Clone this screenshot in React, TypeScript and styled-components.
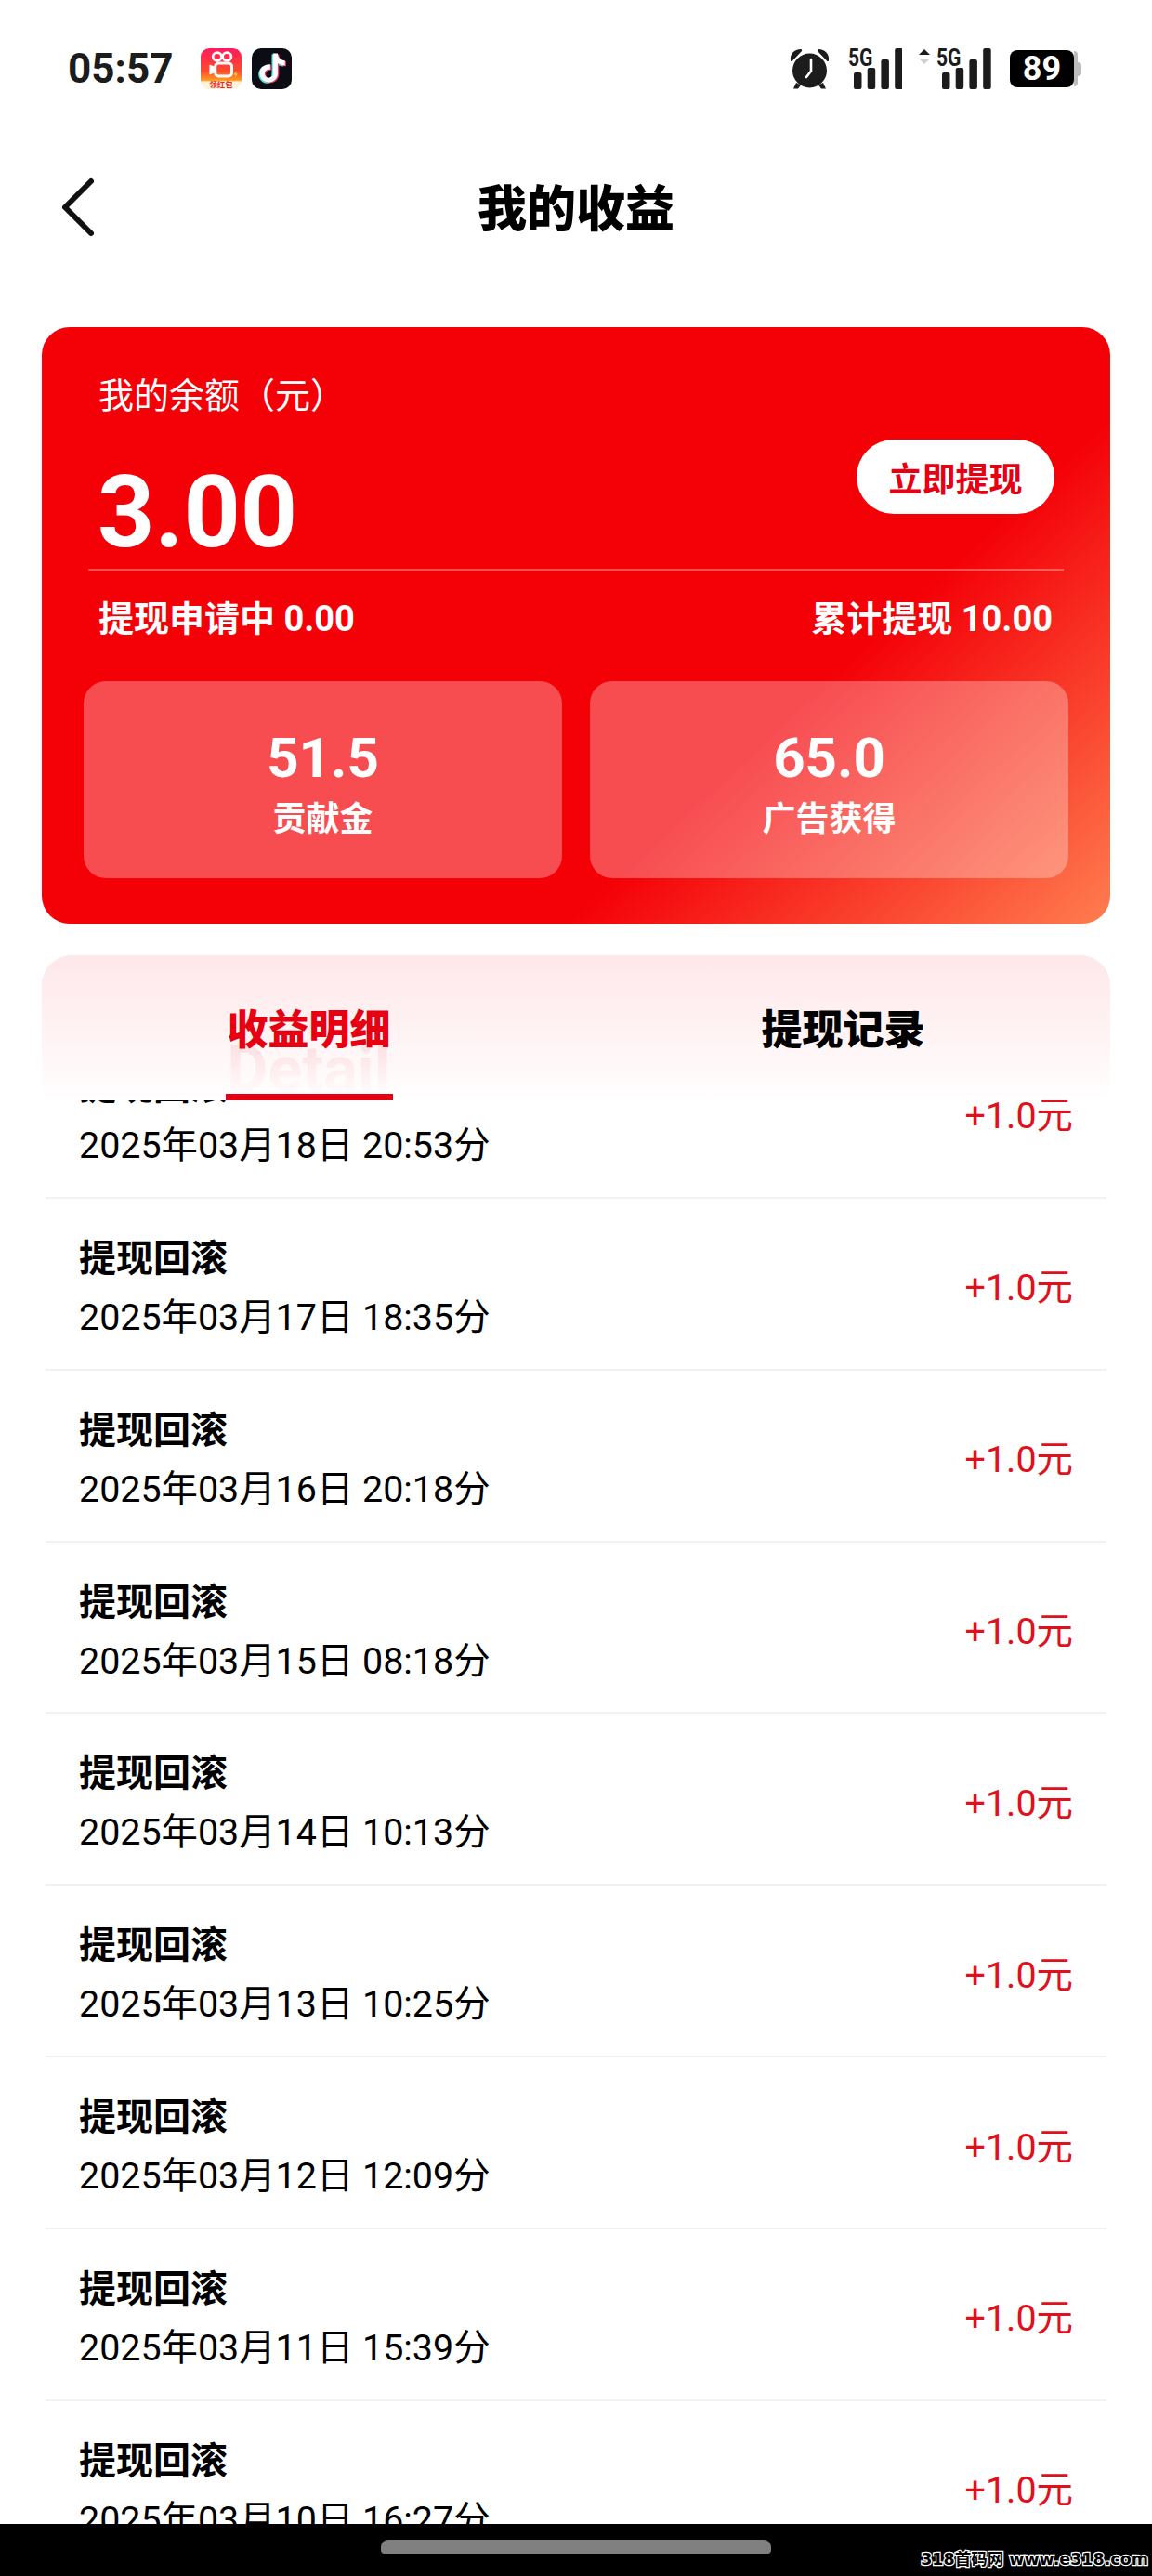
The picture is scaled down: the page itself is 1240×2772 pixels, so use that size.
import React from "react";
import styled, { createGlobalStyle } from "styled-components";

const Global = createGlobalStyle`
  html, body { margin: 0; padding: 0; background: #fff; }
  * { box-sizing: border-box; }
`;

const FONT = `Roboto, "Noto Sans CJK SC", sans-serif`;

const Page = styled.div`
  width: 1240px;
  height: 2772px;
  display: flex;
  flex-direction: column;
  overflow: hidden;
  background: #fff;
  font-family: ${FONT};
  color: #000;
`;

const StatusBar = styled.header`
  height: 150px;
  flex: none;
  padding: 52px 76px 0 73px;
  display: flex;
  justify-content: space-between;
  align-items: flex-start;
`;
const StatusLeft = styled.div`
  display: flex;
  align-items: center;
  height: 44px;
`;
const Clock = styled.span`
  font-size: 44px;
  line-height: 44px;
  font-weight: 700;
  color: #1c1c1c;
  width: 143px;
`;
const AppIcon = styled.svg`
  display: block;
  margin-right: 11px;
`;
const StatusRight = styled.div`
  display: flex;
  align-items: center;
  gap: 18px;
  height: 44px;
`;
const Battery = styled.div`
  display: flex;
  align-items: center;
  width: 77px;
`;
const BatteryBody = styled.div`
  width: 69px;
  height: 40px;
  background: #000;
  border-radius: 8px;
  color: #fff;
  font-size: 36px;
  font-weight: 700;
  line-height: 40px;
  text-align: center;
`;
const BatteryRim = styled.div`
  width: 4px;
  height: 38px;
  background: #bdbdbd;
  border-radius: 0 7px 7px 0;
`;
const BatteryNub = styled.div`
  width: 4px;
  height: 15px;
  background: #bdbdbd;
  border-radius: 0 4px 4px 0;
`;

const NavBar = styled.nav`
  height: 150px;
  flex: none;
  position: relative;
  display: flex;
  align-items: center;
  justify-content: center;
  padding-top: 2px;
  margin-bottom: 52px;
`;
const BackIcon = styled.svg`
  position: absolute;
  left: 64px;
  top: 40px;
`;
const Title = styled.h1`
  margin: 0;
  font-size: 53px;
  font-weight: 900;
  line-height: 64px;
  color: #000;
`;

const Card = styled.section`
  flex: none;
  height: 642px;
  margin: 0 45px;
  padding: 51px 45px 49px;
  border-radius: 30px;
  color: #fff;
  background: linear-gradient(137deg, #f40007 0%, #f40007 68%, #ff7d50 100%);
`;
const BalanceLabel = styled.div`
  padding-left: 16px;
  font-size: 38px;
  line-height: 46px;
`;
const BalanceRow = styled.div`
  height: 163px;
  display: flex;
  justify-content: space-between;
  align-items: flex-start;
  padding: 0 15px 0 15px;
`;
const Amount = styled.div`
  margin-top: 48px;
  font-size: 107px;
  line-height: 110px;
  font-weight: 700;
`;
const WithdrawButton = styled.button`
  margin-top: 24px;
  width: 213px;
  height: 80px;
  border: 0;
  border-radius: 40px;
  background: #fff;
  color: #e60012;
  font-family: ${FONT};
  font-size: 36px;
  font-weight: 700;
  padding: 0;
`;
const Divider = styled.div`
  height: 2px;
  margin: 0 5px;
  background: rgba(255, 255, 255, 0.3);
`;
const SummaryRow = styled.div`
  margin-top: 27px;
  height: 50px;
  padding: 0 17px 0 16px;
  display: flex;
  justify-content: space-between;
  font-size: 38px;
  font-weight: 700;
  line-height: 50px;
`;
const StatsGrid = styled.div`
  margin-top: 42px;
  display: grid;
  grid-template-columns: 1fr 1fr;
  gap: 30px;
`;
const StatBox = styled.div`
  height: 212px;
  padding-top: 48px;
  border-radius: 24px;
  background: rgba(255, 255, 255, 0.3);
  text-align: center;
`;
const StatValue = styled.div`
  font-size: 60px;
  font-weight: 700;
  line-height: 70px;
`;
const StatLabel = styled.div`
  margin-top: 8px;
  font-size: 36px;
  font-weight: 700;
  line-height: 46px;
`;

const Main = styled.main`
  flex: 1;
  min-height: 0;
  margin: 34px 45px 0;
  display: flex;
  flex-direction: column;
  overflow: hidden;
`;
const Tabs = styled.div`
  flex: none;
  height: 156px;
  display: grid;
  grid-template-columns: 1fr 1fr;
  border-radius: 32px 32px 0 0;
  background: linear-gradient(180deg, #fde8ea 0%, #fff2f3 50%, #ffffff 100%);
`;
const Tab = styled.div<{ $active?: boolean }>`
  position: relative;
  height: 156px;
  padding-top: 52px;
  text-align: center;
  font-size: 44px;
  line-height: 58px;
  font-weight: 900;
  color: ${(p) => (p.$active ? "#e60012" : "#000")};
`;
const GhostText = styled.span`
  position: absolute;
  left: 50%;
  top: 92px;
  transform: translateX(-50%);
  font-size: 68px;
  line-height: 62px;
  font-weight: 700;
  background: linear-gradient(180deg, rgba(230, 0, 18, 0.09), rgba(230, 0, 18, 0));
  -webkit-background-clip: text;
  background-clip: text;
  color: transparent;
`;
const TabLine = styled.span`
  position: absolute;
  left: 50%;
  bottom: 0;
  width: 180px;
  height: 7px;
  transform: translateX(-50%);
  background: #e60012;
`;
const ListViewport = styled.div`
  flex: 1;
  min-height: 0;
  overflow: hidden;
  padding: 0 4px;
`;
const List = styled.ul`
  list-style: none;
  margin: -79px 0 0;
  padding: 0;
`;
const Row = styled.li`
  height: 184.86px;
  padding: 10px 36px 0 36px;
  display: flex;
  justify-content: space-between;
  align-items: center;
  border-bottom: 2px solid #f1f1f1;
`;
const RowText = styled.div`
  display: flex;
  flex-direction: column;
  gap: 13px;
`;
const RowTitle = styled.div`
  font-size: 40px;
  line-height: 50px;
  font-weight: 700;
`;
const RowDate = styled.div`
  font-size: 39.4px;
  line-height: 50px;
`;
const RowValue = styled.div`
  font-size: 39.4px;
  line-height: 50px;
  color: #e0101c;
`;

const HomeBar = styled.footer`
  flex: none;
  height: 56px;
  position: relative;
  background: #000;
  display: flex;
  justify-content: center;
  padding-top: 17px;
`;
const HomePill = styled.div`
  width: 420px;
  height: 15px;
  background: #808080;
  border-radius: 8px 8px 4px 4px;
`;
const Watermark = styled.div`
  position: absolute;
  right: 4px;
  top: 26px;
  font-family: "DejaVu Sans", "Noto Sans CJK SC", sans-serif;
  font-size: 17.5px;
  line-height: 24px;
  font-weight: 700;
  white-space: nowrap;
  color: #000;
  -webkit-text-stroke: 2.5px #fff;
  paint-order: stroke fill;
`;

const TIKTOK =
  "M12.525.02c1.31-.02 2.61-.01 3.91-.02.08 1.53.63 3.09 1.75 4.17 1.12 1.11 2.7 1.62 4.24 1.79v4.03c-1.44-.05-2.89-.35-4.2-.97-.57-.26-1.1-.59-1.62-.93-.01 2.92.01 5.84-.02 8.75-.08 1.4-.54 2.79-1.35 3.94-1.31 1.92-3.58 3.17-5.91 3.21-1.43.08-2.86-.31-4.08-1.03-2.02-1.19-3.44-3.37-3.65-5.71-.02-.5-.03-1-.01-1.49.18-1.9 1.12-3.72 2.58-4.96 1.66-1.44 3.98-2.13 6.15-1.72.02 1.48-.04 2.96-.04 4.44-.99-.32-2.15-.23-3.02.37-.63.41-1.11 1.04-1.36 1.75-.21.51-.15 1.07-.14 1.61.24 1.64 1.82 3.02 3.5 2.87 1.12-.01 2.19-.66 2.77-1.61.19-.33.4-.67.41-1.06.1-1.79.06-3.57.07-5.36.01-4.03-.01-8.05.02-12.07z";

const KuaishouIcon = () => (
  <AppIcon width="44" height="44" viewBox="0 0 42 44" preserveAspectRatio="none">
    <defs>
      <linearGradient id="ks" x1="0" y1="0" x2="0" y2="1">
        <stop offset="0" stopColor="#ff1a5e" />
        <stop offset="0.55" stopColor="#ff4a2c" />
        <stop offset="0.78" stopColor="#ff9a1f" />
        <stop offset="0.82" stopColor="#fff3dc" />
        <stop offset="1" stopColor="#fff3dc" />
      </linearGradient>
    </defs>
    <rect width="42" height="44" rx="9" fill="url(#ks)" />
    <circle cx="17" cy="9" r="4.4" fill="none" stroke="#fff" strokeWidth="2.6" />
    <circle cx="27" cy="9" r="4.4" fill="none" stroke="#fff" strokeWidth="2.6" />
    <rect x="15" y="16" width="17" height="14" rx="3.5" fill="none" stroke="#fff" strokeWidth="2.8" />
    <path d="M14 19.5 L9 17.5 V28.5 L14 26.5 Z" fill="#fff" />
    <path d="M37 24 l-3 4.5 h2 l-1 3.5 3-4.5 h-2 z" fill="#ffd84a" />
    <text x="21" y="42" textAnchor="middle" fontSize="8" fontWeight="700" fill="#e8261d" fontFamily="Noto Sans CJK SC, sans-serif">领红包</text>
  </AppIcon>
);

const TiktokIcon = () => (
  <AppIcon width="43" height="44" viewBox="0 0 43 44">
    <rect width="43" height="44" rx="10" fill="#0c0c14" />
    <g transform="translate(6.5 5.5) scale(1.3)">
      <path d={TIKTOK} fill="#4fe6e6" transform="translate(-1 .8)" />
      <path d={TIKTOK} fill="#f0335a" transform="translate(1 .5)" />
      <path d={TIKTOK} fill="#fff" />
    </g>
  </AppIcon>
);

const AlarmIcon = () => (
  <svg width="43" height="44" viewBox="0 0 43 44" style={{ display: "block" }}>
    <path d="M1 13 C0 6 5 1 12 1 C13 1 13.5 2 13 3 L3 13.5 C2 14.5 1 14 1 13 Z" fill="#1c1c1c" />
    <path d="M42 13 C43 6 38 1 31 1 C30 1 29.5 2 30 3 L40 13.5 C41 14.5 42 14 42 13 Z" fill="#1c1c1c" />
    <circle cx="21.5" cy="24" r="18.5" fill="#1c1c1c" />
    <path d="M7 37 L4 43.5 H9 L12 39.5 Z M36 37 L39 43.5 H34 L31 39.5 Z" fill="#1c1c1c" />
    <path d="M23 12 V24.5 L18 31" fill="none" stroke="#fff" strokeWidth="2.6" strokeLinecap="round" strokeLinejoin="round" />
  </svg>
);

const Bars = ({ x }: { x: number }) => (
  <g fill="#1c1c1c">
    <rect x={x} y="26" width="8.5" height="18" rx="2" />
    <rect x={x + 14.7} y="21" width="8.5" height="23" rx="2" />
    <rect x={x + 29.4} y="12" width="8.5" height="32" rx="2" />
    <rect x={x + 44.2} y="0" width="8.5" height="44" rx="2" />
  </g>
);

const FiveG = ({ x }: { x: number }) => (
  <text
    x={x}
    y="19"
    fontSize="26"
    fontWeight="700"
    fill="#1c1c1c"
    fontFamily="Roboto, sans-serif"
    textLength="26.5"
    lengthAdjust="spacingAndGlyphs"
  >
    5G
  </text>
);

const SignalOne = () => (
  <svg width="60" height="44" viewBox="0 0 60 44" style={{ display: "block" }}>
    <FiveG x={2} />
    <Bars x={8} />
  </svg>
);

const SignalTwo = () => (
  <svg width="80" height="44" viewBox="0 0 80 44" style={{ display: "block" }}>
    <path d="M6 1 L12 7 H0 Z" fill="#1c1c1c" />
    <path d="M0 11 H12 L6 17 Z" fill="#cfcfcf" />
    <FiveG x={19} />
    <Bars x={25} />
  </svg>
);

const rows = [
  "2025年03月18日 20:53分",
  "2025年03月17日 18:35分",
  "2025年03月16日 20:18分",
  "2025年03月15日 08:18分",
  "2025年03月14日 10:13分",
  "2025年03月13日 10:25分",
  "2025年03月12日 12:09分",
  "2025年03月11日 15:39分",
  "2025年03月10日 16:27分",
];

export default function App() {
  return (
    <Page>
      <Global />
      <StatusBar>
        <StatusLeft>
          <Clock>05:57</Clock>
          <KuaishouIcon />
          <TiktokIcon />
        </StatusLeft>
        <StatusRight>
          <AlarmIcon />
          <SignalOne />
          <SignalTwo />
          <Battery>
            <BatteryBody>89</BatteryBody>
            <BatteryRim />
            <BatteryNub />
          </Battery>
        </StatusRight>
      </StatusBar>

      <NavBar>
        <BackIcon width="42" height="70" viewBox="0 0 42 70">
          <path d="M34 5 L6 33 L34 61" fill="none" stroke="#111" strokeWidth="6" strokeLinecap="round" strokeLinejoin="round" />
        </BackIcon>
        <Title>我的收益</Title>
      </NavBar>

      <Card>
        <BalanceLabel>我的余额（元）</BalanceLabel>
        <BalanceRow>
          <Amount>3.00</Amount>
          <WithdrawButton>立即提现</WithdrawButton>
        </BalanceRow>
        <Divider />
        <SummaryRow>
          <span>提现申请中 0.00</span>
          <span>累计提现 10.00</span>
        </SummaryRow>
        <StatsGrid>
          <StatBox>
            <StatValue>51.5</StatValue>
            <StatLabel>贡献金</StatLabel>
          </StatBox>
          <StatBox>
            <StatValue>65.0</StatValue>
            <StatLabel>广告获得</StatLabel>
          </StatBox>
        </StatsGrid>
      </Card>

      <Main>
        <Tabs>
          <Tab $active>
            收益明细
            <GhostText>Detail</GhostText>
            <TabLine />
          </Tab>
          <Tab>提现记录</Tab>
        </Tabs>
        <ListViewport>
          <List>
            {rows.map((date) => (
              <Row key={date}>
                <RowText>
                  <RowTitle>提现回滚</RowTitle>
                  <RowDate>{date}</RowDate>
                </RowText>
                <RowValue>+1.0元</RowValue>
              </Row>
            ))}
          </List>
        </ListViewport>
      </Main>

      <HomeBar>
        <HomePill />
        <Watermark>318首码网 www.e318.com</Watermark>
      </HomeBar>
    </Page>
  );
}
